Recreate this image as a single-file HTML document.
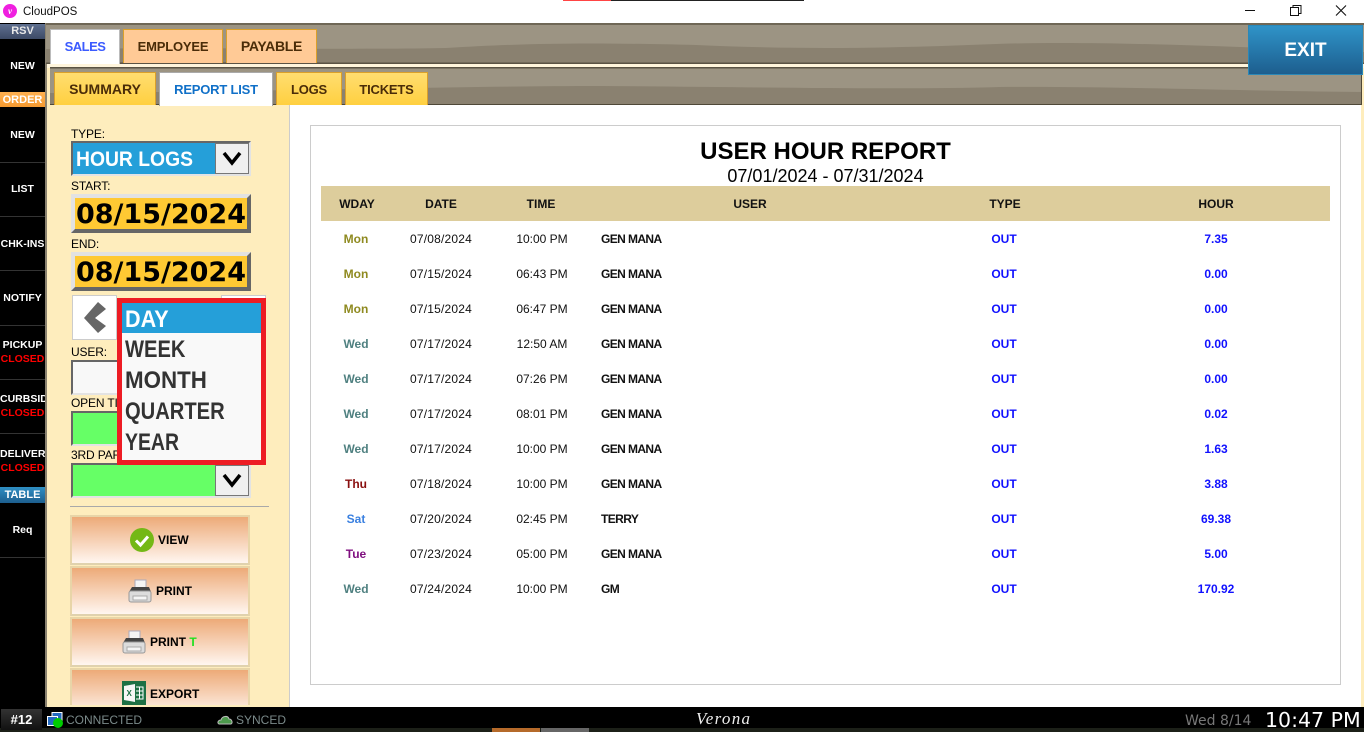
<!DOCTYPE html>
<html><head><meta charset="utf-8"><style>
*{box-sizing:border-box}
html,body{margin:0;padding:0;width:1370px;height:732px;overflow:hidden;background:#fff;font-family:"Liberation Sans",sans-serif}
.a{position:absolute}
.t{position:absolute;white-space:nowrap}
.side{position:absolute;left:0;width:45px;text-align:center;color:#fff;font-weight:bold;font-size:10.5px;line-height:14px;white-space:nowrap;overflow:hidden}
.sep{position:absolute;left:0;width:45px;height:1px;background:#333}
.red{color:#f00}
.tab{position:absolute;text-align:center;font-weight:bold;font-size:13px;letter-spacing:-.2px;color:#4a2c08}
.lab{position:absolute;left:71px;font-size:12px;letter-spacing:-.15px;color:#000;white-space:nowrap;line-height:14px}
.date{position:absolute;left:71px;width:180px;height:39px;background:#FFC933;border-style:solid;border-width:4px;border-color:#e2e2e2 #666 #666 #e2e2e2;font:bold 27px/34px "DejaVu Sans",sans-serif;color:#000;text-align:center;white-space:nowrap;overflow:hidden}
.dd{position:absolute;width:34px;background:#f0f0f0;border:1px solid #777}
.btn{position:absolute;left:70px;width:180px;background:linear-gradient(#EDAA78,#FFF6F0);border:2px solid #E8D5A8;border-bottom-color:#e0d2ae;font-weight:bold;font-size:12px;color:#000;white-space:nowrap}
.it{height:31px;font-weight:bold;font-size:24px;line-height:33px;padding-left:3px;color:#333;white-space:nowrap}
.it span{display:inline-block;transform-origin:0 50%}
.th{position:absolute;top:197px;font-weight:bold;font-size:12px;color:#111;text-align:center;white-space:nowrap}
.c{position:absolute;font-size:12px;line-height:14px;white-space:nowrap;text-align:center}
.w{left:326px;width:60px;font-weight:bold}
.d{left:401px;width:80px;color:#111;letter-spacing:.2px}
.m{left:502px;width:80px;color:#111}
.u{left:601px;text-align:left;font-weight:bold;color:#111;letter-spacing:-.6px}
.o{left:974px;width:60px;font-weight:bold;color:#11f}
.h{left:1176px;width:80px;font-weight:bold;color:#11f}
</style></head><body>

<!-- title bar -->
<div class="a" style="left:563px;top:0;width:48px;height:1px;background:#f44"></div>
<div class="a" style="left:611px;top:0;width:193px;height:1px;background:#222"></div>
<div class="a" style="left:3px;top:4px;width:14px;height:14px;border-radius:50%;background:#f01fe0;color:#fff;font:italic bold 9px/14px 'Liberation Serif',serif;text-align:center">v</div>
<div class="t" style="left:23px;top:5px;font-size:11.500px;line-height:14px;color:#111">CloudPOS</div>
<svg class="a" style="left:1230px;top:0" width="134" height="22" fill="none" stroke="#111" stroke-width="1">
<path d="M15 10.500H25"/><path d="M60.500 7.500h8v8h-8zM63 7.500V5.500h8v8h-2"/><path d="M106 5.500l10 10M116 5.500l-10 10" stroke-width="1.100"/></svg>

<!-- main background -->
<div class="a" style="left:45px;top:23px;width:1319px;height:685px;background:#FEEDBD"></div>
<div class="a" style="left:46px;top:63px;width:1318px;height:5px;background:#FFF5DC"></div>
<div class="a" style="left:45px;top:23px;width:2px;height:685px;background:#8a8270"></div>

<!-- band 1 -->
<svg class="a" style="left:46px;top:23px" width="1318" height="41">
<rect width="1318" height="41" fill="#9C9483"/>
<path d="M0 26C150 24 300 27 400 25 500 19 560 20 650 22 760 27 850 25 950 21 1040 18 1150 22 1318 29V41H0Z" fill="#8A8170"/>
<rect width="1318" height="2" fill="#6f6756"/><rect y="39.500" width="1318" height="1.500" fill="#5a5344"/></svg>
<!-- band 2 -->
<svg class="a" style="left:50px;top:67px" width="1312" height="38">
<rect width="1312" height="38" fill="#9C9483"/>
<path d="M0 26C200 25 400 19 550 19 700 20 850 23 950 20 1050 19 1200 24 1312 25V38H0Z" fill="#8A8170"/>
<rect width="1312" height="1.500" fill="#5a5344"/><rect y="37" width="1312" height="1" fill="#4f4838"/><rect x="1311" width="1" height="38" fill="#4f4838"/></svg>

<!-- tabs -->
<div class="tab" style="left:50px;top:29px;width:70px;height:35px;background:#fff;border:1px solid #bbb;border-bottom:0;color:#3b5bff;line-height:33px;letter-spacing:-.5px">SALES</div>
<div class="tab" style="left:123px;top:29px;width:100px;height:34px;background:#FFCA96;border:1px solid #dba02a;border-bottom:0;line-height:33px">EMPLOYEE</div>
<div class="tab" style="left:226px;top:29px;width:91px;height:34px;background:#FFCA96;border:1px solid #dba02a;border-bottom:0;line-height:33px;font-size:14px;letter-spacing:-.3px">PAYABLE</div>

<div class="tab" style="left:54px;top:72px;width:102px;height:33px;background:linear-gradient(#FFDD70,#FFD040);border:1px solid #dba02a;border-bottom:0;line-height:33px;font-size:14px;letter-spacing:0">SUMMARY</div>
<div class="tab" style="left:159px;top:72px;width:114px;height:34px;background:#fff;border:1px solid #aaa;border-bottom:0;color:#1070c8;line-height:33px">REPORT LIST</div>
<div class="tab" style="left:276px;top:72px;width:66px;height:33px;background:linear-gradient(#FFDD70,#FFD040);border:1px solid #dba02a;border-bottom:0;line-height:33px">LOGS</div>
<div class="tab" style="left:345px;top:72px;width:83px;height:33px;background:linear-gradient(#FFDD70,#FFD040);border:1px solid #dba02a;border-bottom:0;line-height:33px">TICKETS</div>

<!-- exit -->
<div class="a" style="left:1248px;top:25px;width:115px;height:50px;background:linear-gradient(#2F93C8,#1D5E8E);border:1px solid #2a88b8;color:#fff;font-weight:bold;font-size:19px;line-height:50px;text-align:center">EXIT</div>

<!-- white content -->
<div class="a" style="left:289px;top:105px;width:1072px;height:602px;background:#fff;border-left:1px solid #ccc"></div>
<div class="a" style="left:310px;top:125px;width:1031px;height:560px;border:1px solid #ccc;background:#fff"></div>

<div class="t" style="left:310px;width:1031px;top:137px;text-align:center;font-weight:bold;font-size:24px;line-height:30px;color:#000">USER HOUR REPORT</div>
<div class="t" style="left:310px;width:1031px;top:166px;text-align:center;font-size:18px;line-height:20px;color:#000">07/01/2024 - 07/31/2024</div>
<div class="a" style="left:321px;top:186px;width:1009px;height:35px;background:#DDCD9C"></div>
<div class="th" style="left:321px;width:72px">WDAY</div>
<div class="th" style="left:401px;width:80px">DATE</div>
<div class="th" style="left:501px;width:80px">TIME</div>
<div class="th" style="left:700px;width:100px">USER</div>
<div class="th" style="left:965px;width:80px">TYPE</div>
<div class="th" style="left:1176px;width:80px">HOUR</div>

<!-- rows -->
<div class="c w" style="top:232px;color:#8f8a20">Mon</div><div class="c d" style="top:232px">07/08/2024</div><div class="c m" style="top:232px">10:00 PM</div><div class="c u" style="top:232px">GEN MANA</div><div class="c o" style="top:232px">OUT</div><div class="c h" style="top:232px">7.35</div>
<div class="c w" style="top:267px;color:#8f8a20">Mon</div><div class="c d" style="top:267px">07/15/2024</div><div class="c m" style="top:267px">06:43 PM</div><div class="c u" style="top:267px">GEN MANA</div><div class="c o" style="top:267px">OUT</div><div class="c h" style="top:267px">0.00</div>
<div class="c w" style="top:302px;color:#8f8a20">Mon</div><div class="c d" style="top:302px">07/15/2024</div><div class="c m" style="top:302px">06:47 PM</div><div class="c u" style="top:302px">GEN MANA</div><div class="c o" style="top:302px">OUT</div><div class="c h" style="top:302px">0.00</div>
<div class="c w" style="top:337px;color:#4f8080">Wed</div><div class="c d" style="top:337px">07/17/2024</div><div class="c m" style="top:337px">12:50 AM</div><div class="c u" style="top:337px">GEN MANA</div><div class="c o" style="top:337px">OUT</div><div class="c h" style="top:337px">0.00</div>
<div class="c w" style="top:372px;color:#4f8080">Wed</div><div class="c d" style="top:372px">07/17/2024</div><div class="c m" style="top:372px">07:26 PM</div><div class="c u" style="top:372px">GEN MANA</div><div class="c o" style="top:372px">OUT</div><div class="c h" style="top:372px">0.00</div>
<div class="c w" style="top:407px;color:#4f8080">Wed</div><div class="c d" style="top:407px">07/17/2024</div><div class="c m" style="top:407px">08:01 PM</div><div class="c u" style="top:407px">GEN MANA</div><div class="c o" style="top:407px">OUT</div><div class="c h" style="top:407px">0.02</div>
<div class="c w" style="top:442px;color:#4f8080">Wed</div><div class="c d" style="top:442px">07/17/2024</div><div class="c m" style="top:442px">10:00 PM</div><div class="c u" style="top:442px">GEN MANA</div><div class="c o" style="top:442px">OUT</div><div class="c h" style="top:442px">1.63</div>
<div class="c w" style="top:477px;color:#8a1010">Thu</div><div class="c d" style="top:477px">07/18/2024</div><div class="c m" style="top:477px">10:00 PM</div><div class="c u" style="top:477px">GEN MANA</div><div class="c o" style="top:477px">OUT</div><div class="c h" style="top:477px">3.88</div>
<div class="c w" style="top:512px;color:#3a80e0">Sat</div><div class="c d" style="top:512px">07/20/2024</div><div class="c m" style="top:512px">02:45 PM</div><div class="c u" style="top:512px">TERRY</div><div class="c o" style="top:512px">OUT</div><div class="c h" style="top:512px">69.38</div>
<div class="c w" style="top:547px;color:#801080">Tue</div><div class="c d" style="top:547px">07/23/2024</div><div class="c m" style="top:547px">05:00 PM</div><div class="c u" style="top:547px">GEN MANA</div><div class="c o" style="top:547px">OUT</div><div class="c h" style="top:547px">5.00</div>
<div class="c w" style="top:582px;color:#4f8080">Wed</div><div class="c d" style="top:582px">07/24/2024</div><div class="c m" style="top:582px">10:00 PM</div><div class="c u" style="top:582px">GM</div><div class="c o" style="top:582px">OUT</div><div class="c h" style="top:582px">170.92</div>

<!-- left form -->
<div class="lab" style="top:127px">TYPE:</div>
<div class="a" style="left:71px;top:141px;width:180px;height:35px;background:#259FD9;border-style:solid;border-width:2px;border-color:#666 #e3e3e3 #e3e3e3 #666;color:#fff;font-weight:bold;font-size:21px;line-height:33px;padding-left:3px;white-space:nowrap"><span style="display:inline-block;transform:scaleX(.92);transform-origin:0 50%">HOUR LOGS</span></div>
<div class="dd" style="left:215px;top:143px;height:31px"></div>
<svg class="a" style="left:222px;top:150px" width="20" height="16"><path d="M2 3L10 13 18 3" fill="none" stroke="#000" stroke-width="3.500"/></svg>

<div class="lab" style="top:179px">START:</div>
<div class="date" style="top:194px">08/15/2024</div>
<div class="lab" style="top:237px">END:</div>
<div class="date" style="top:252px">08/15/2024</div>

<div class="a" style="left:72px;top:295px;width:45px;height:45px;background:#fff;border:1px solid #ccc"></div>
<svg class="a" style="left:72px;top:295px" width="45" height="45"><path d="M12 23L26 7 34 14 23 23 34 31 26 38Z" fill="#666"/></svg>
<div class="a" style="left:221px;top:295px;width:45px;height:45px;background:#fff;border:1px solid #ccc"></div>

<div class="lab" style="top:345px">USER:</div>
<div class="a" style="left:71px;top:360px;width:180px;height:35px;background:#f8f8f8;border-style:solid;border-width:2px;border-color:#666 #e3e3e3 #e3e3e3 #666"></div>
<div class="lab" style="top:396px">OPEN TICKET:</div>
<div class="a" style="left:71px;top:411px;width:180px;height:35px;background:#66FF66;border-style:solid;border-width:2px;border-color:#666 #e3e3e3 #e3e3e3 #666"></div>
<div class="lab" style="top:448px">3RD PARTY:</div>
<div class="a" style="left:71px;top:463px;width:180px;height:35px;background:#66FF66;border-style:solid;border-width:2px;border-color:#666 #e3e3e3 #e3e3e3 #666"></div>
<div class="dd" style="left:215px;top:465px;height:31px"></div>
<svg class="a" style="left:222px;top:472px" width="20" height="16"><path d="M2 3L10 13 18 3" fill="none" stroke="#000" stroke-width="3.500"/></svg>

<div class="a" style="left:70px;top:506px;width:199px;height:1px;background:#a9a9a9"></div>

<!-- dropdown -->
<div class="a" style="left:117px;top:298px;width:149px;height:167px;border:5px solid #ED1C24;background:#f9f9f9">
<div class="it" style="background:#259FD9;color:#fff;height:30px"><span style="transform:scaleX(.9)">DAY</span></div>
<div class="it"><span style="transform:scaleX(.84)">WEEK</span></div>
<div class="it"><span style="transform:scaleX(.93)">MONTH</span></div>
<div class="it"><span style="transform:scaleX(.84)">QUARTER</span></div>
<div class="it"><span style="transform:scaleX(.81)">YEAR</span></div>
</div>

<!-- buttons -->
<div class="btn" style="top:515px;height:50px"><div class="t" style="left:86px;top:16px">VIEW</div></div>
<svg class="a" style="left:130px;top:528px" width="24" height="24"><circle cx="12" cy="12" r="12" fill="#74B816"/><path d="M6 12.500l4.500 4.500L18 8.500" fill="none" stroke="#fff" stroke-width="3"/></svg>
<div class="btn" style="top:566px;height:50px"><div class="t" style="left:84px;top:16px">PRINT</div></div>
<svg class="a" style="left:128px;top:579px" width="24" height="24"><rect x="7" y="1" width="11" height="9" fill="#f4f4f4" stroke="#aab"/><path d="M4 8h17l2 5H1z" fill="#444"/><rect x="1" y="12" width="22" height="11" rx="2" fill="#dcdcdc" stroke="#999"/><rect x="5" y="17" width="14" height="4" fill="#f5f5f5" stroke="#aaa"/></svg>
<div class="btn" style="top:617px;height:50px"><div class="t" style="left:78px;top:16px">PRINT <span style="color:#1fe01f">T</span></div></div>
<svg class="a" style="left:122px;top:630px" width="24" height="24"><rect x="7" y="1" width="11" height="9" fill="#f4f4f4" stroke="#aab"/><path d="M4 8h17l2 5H1z" fill="#444"/><rect x="1" y="12" width="22" height="11" rx="2" fill="#dcdcdc" stroke="#999"/><rect x="5" y="17" width="14" height="4" fill="#f5f5f5" stroke="#aaa"/></svg>
<div class="a" style="left:70px;top:668px;width:180px;height:37px;overflow:hidden"><div class="btn" style="left:0;top:0;height:50px"><div class="t" style="left:78px;top:17px">EXPORT</div></div></div>
<svg class="a" style="left:122px;top:681px" width="24" height="24"><rect width="24" height="24" fill="#1D7044"/><path d="M2 5l11-2v18L2 19z" fill="#f6f6f6"/><path d="M14 6h7v12h-7M14 10h7M14 14h7M17.500 6v12" fill="none" stroke="#fff"/><text x="4.500" y="15" font-family="Liberation Sans" font-weight="bold" font-size="8" fill="#1D7044">X</text></svg>

<!-- sidebar -->
<div class="a" style="left:0;top:23px;width:45px;height:709px;background:#000"></div>
<div class="side" style="top:24px;height:15px;background:linear-gradient(#5e6f8f,#3d4a66);line-height:15px;color:#e8e8e8;font-size:11px">RSV</div>
<div class="side" style="top:59px">NEW</div>
<div class="side" style="top:92px;height:15px;background:linear-gradient(#ffb050,#f59a30);line-height:16px;color:#fff;font-size:11px">ORDER</div>
<div class="side" style="top:128px">NEW</div>
<div class="sep" style="top:162px"></div>
<div class="side" style="top:182px">LIST</div>
<div class="sep" style="top:216px"></div>
<div class="side" style="top:237px">CHK-INS</div>
<div class="sep" style="top:270px"></div>
<div class="side" style="top:291px">NOTIFY</div>
<div class="sep" style="top:325px"></div>
<div class="side" style="top:338px">PICKUP<br><span class="red">CLOSED</span></div>
<div class="sep" style="top:379px"></div>
<div class="side" style="top:392px">CURBSIDE<br><span class="red">CLOSED</span></div>
<div class="sep" style="top:433px"></div>
<div class="side" style="top:447px">DELIVERY<br><span class="red">CLOSED</span></div>
<div class="side" style="top:487px;height:16px;background:linear-gradient(#2F8FC4,#1D5E8E);line-height:17px;color:#fff;font-size:11px">TABLE</div>
<div class="side" style="top:523px">Req</div>
<div class="sep" style="top:557px"></div>

<!-- bottom bar -->
<div class="a" style="left:0;top:707px;width:1364px;height:21px;background:#000"></div>
<div class="a" style="left:0;top:728px;width:1364px;height:4px;background:#1c2018"></div>
<div class="a" style="left:492px;top:728px;width:48px;height:4px;background:#b56a2a"></div>
<div class="a" style="left:541px;top:728px;width:48px;height:4px;background:#666"></div>
<div class="a" style="left:1px;top:709px;width:41px;height:21px;background:linear-gradient(#333,#111);color:#fff;font-weight:bold;font-size:13px;line-height:21px;text-align:center">#12</div>
<svg class="a" style="left:47px;top:712px" width="17" height="16"><rect x="5" y="0.500" width="10" height="9" fill="#246ac0" stroke="#fff"/><rect x="0.500" y="4.500" width="10" height="9" fill="#246ac0" stroke="#fff"/><circle cx="11" cy="11" r="5" fill="#0c0"/></svg>
<div class="t" style="left:66px;top:713px;font-size:12px;line-height:14px;color:#7b8a8a">CONNECTED</div>
<svg class="a" style="left:217px;top:714px" width="17" height="12"><path d="M2 10C0 9 1 6 4 6 5 2 11 1 12 5 15 5 16 9 14 10Z" fill="#4d9a4d" stroke="#bbb"/></svg>
<div class="t" style="left:236px;top:713px;font-size:12px;line-height:14px;color:#7b8a8a">SYNCED</div>
<div class="t" style="left:696px;top:709px;font:italic 17px/20px 'Liberation Serif',serif;color:#eee;letter-spacing:1.300px">Verona</div>
<div class="t" style="left:1185px;top:713px;font:14px/16px 'DejaVu Sans',sans-serif;color:#777">Wed 8/14</div>
<div class="t" style="left:1265px;top:708px;font:20.500px/24px 'DejaVu Sans',sans-serif;color:#fff">10:47 PM</div>
</body></html>
